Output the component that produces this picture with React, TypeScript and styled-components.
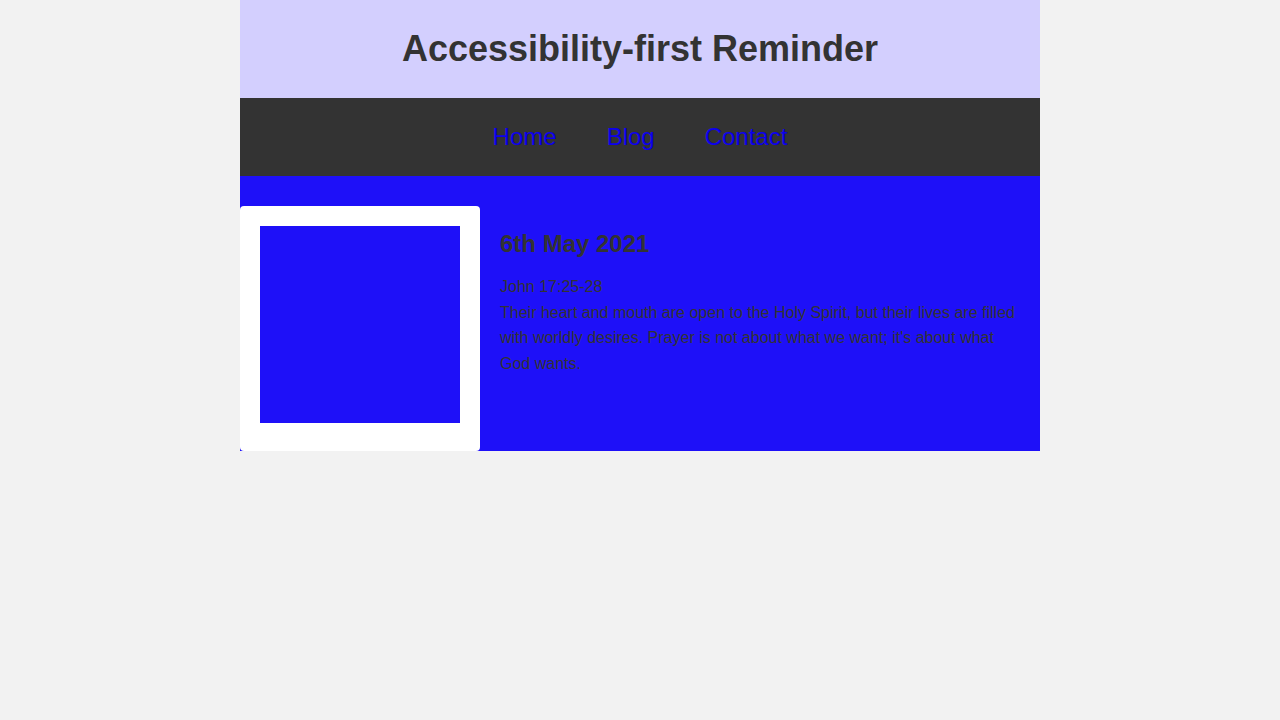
import React from "react";
import styled, { createGlobalStyle } from "styled-components";

const Global = createGlobalStyle`
  html, body { margin: 0; padding: 0; }
  body {
    background: #f2f2f2;
    font-family: "Liberation Sans", Arial, sans-serif;
    color: #333333;
  }
`;

const Page = styled.div`
  width: 800px;
  margin: 0 auto;
`;

const Header = styled.header`
  height: 98px;
  background: #d3cffe;
  display: flex;
  align-items: center;
  justify-content: center;
`;

const Title = styled.h1`
  margin: 0;
  font-size: 36px;
  font-weight: 700;
  color: #333333;
`;

const Nav = styled.nav`
  height: 78px;
  background: #333333;
  display: flex;
  align-items: center;
  justify-content: center;
  gap: 50px;
`;

const NavLink = styled.a`
  font-size: 24px;
  color: #0c00ee;
  text-decoration: none;
`;

const Main = styled.main`
  background: #1e10f8;
  padding-top: 30px;
  display: flex;
  gap: 20px;
`;

const Card = styled.div`
  width: 200px;
  height: 205px;
  flex: none;
  background: #ffffff;
  border-radius: 4px;
  padding: 20px;
`;

const Picture = styled.div`
  width: 200px;
  height: 197px;
  background: #1e10f8;
`;

const Body = styled.div`
  flex: 1;
  padding-right: 20px;
`;

const DateHeading = styled.h2`
  margin: 24px 0 16px;
  font-size: 24px;
  font-weight: 700;
  color: #333333;
`;

const Text = styled.p`
  margin: 0;
  font-size: 16px;
  line-height: 25.6px;
  color: #333333;
`;

export default function App() {
  return (
    <Page>
      <Global />
      <Header>
        <Title>Accessibility-first Reminder</Title>
      </Header>
      <Nav>
        <NavLink href="#">Home</NavLink>
        <NavLink href="#">Blog</NavLink>
        <NavLink href="#">Contact</NavLink>
      </Nav>
      <Main>
        <Card>
          <Picture />
        </Card>
        <Body>
          <DateHeading>6th May 2021</DateHeading>
          <Text>
            John 17:25-28
            <br />
            Their heart and mouth are open to the Holy Spirit, but their lives are filled
            with worldly desires. Prayer is not about what we want; it's about what God wants.
          </Text>
        </Body>
      </Main>
    </Page>
  );
}
